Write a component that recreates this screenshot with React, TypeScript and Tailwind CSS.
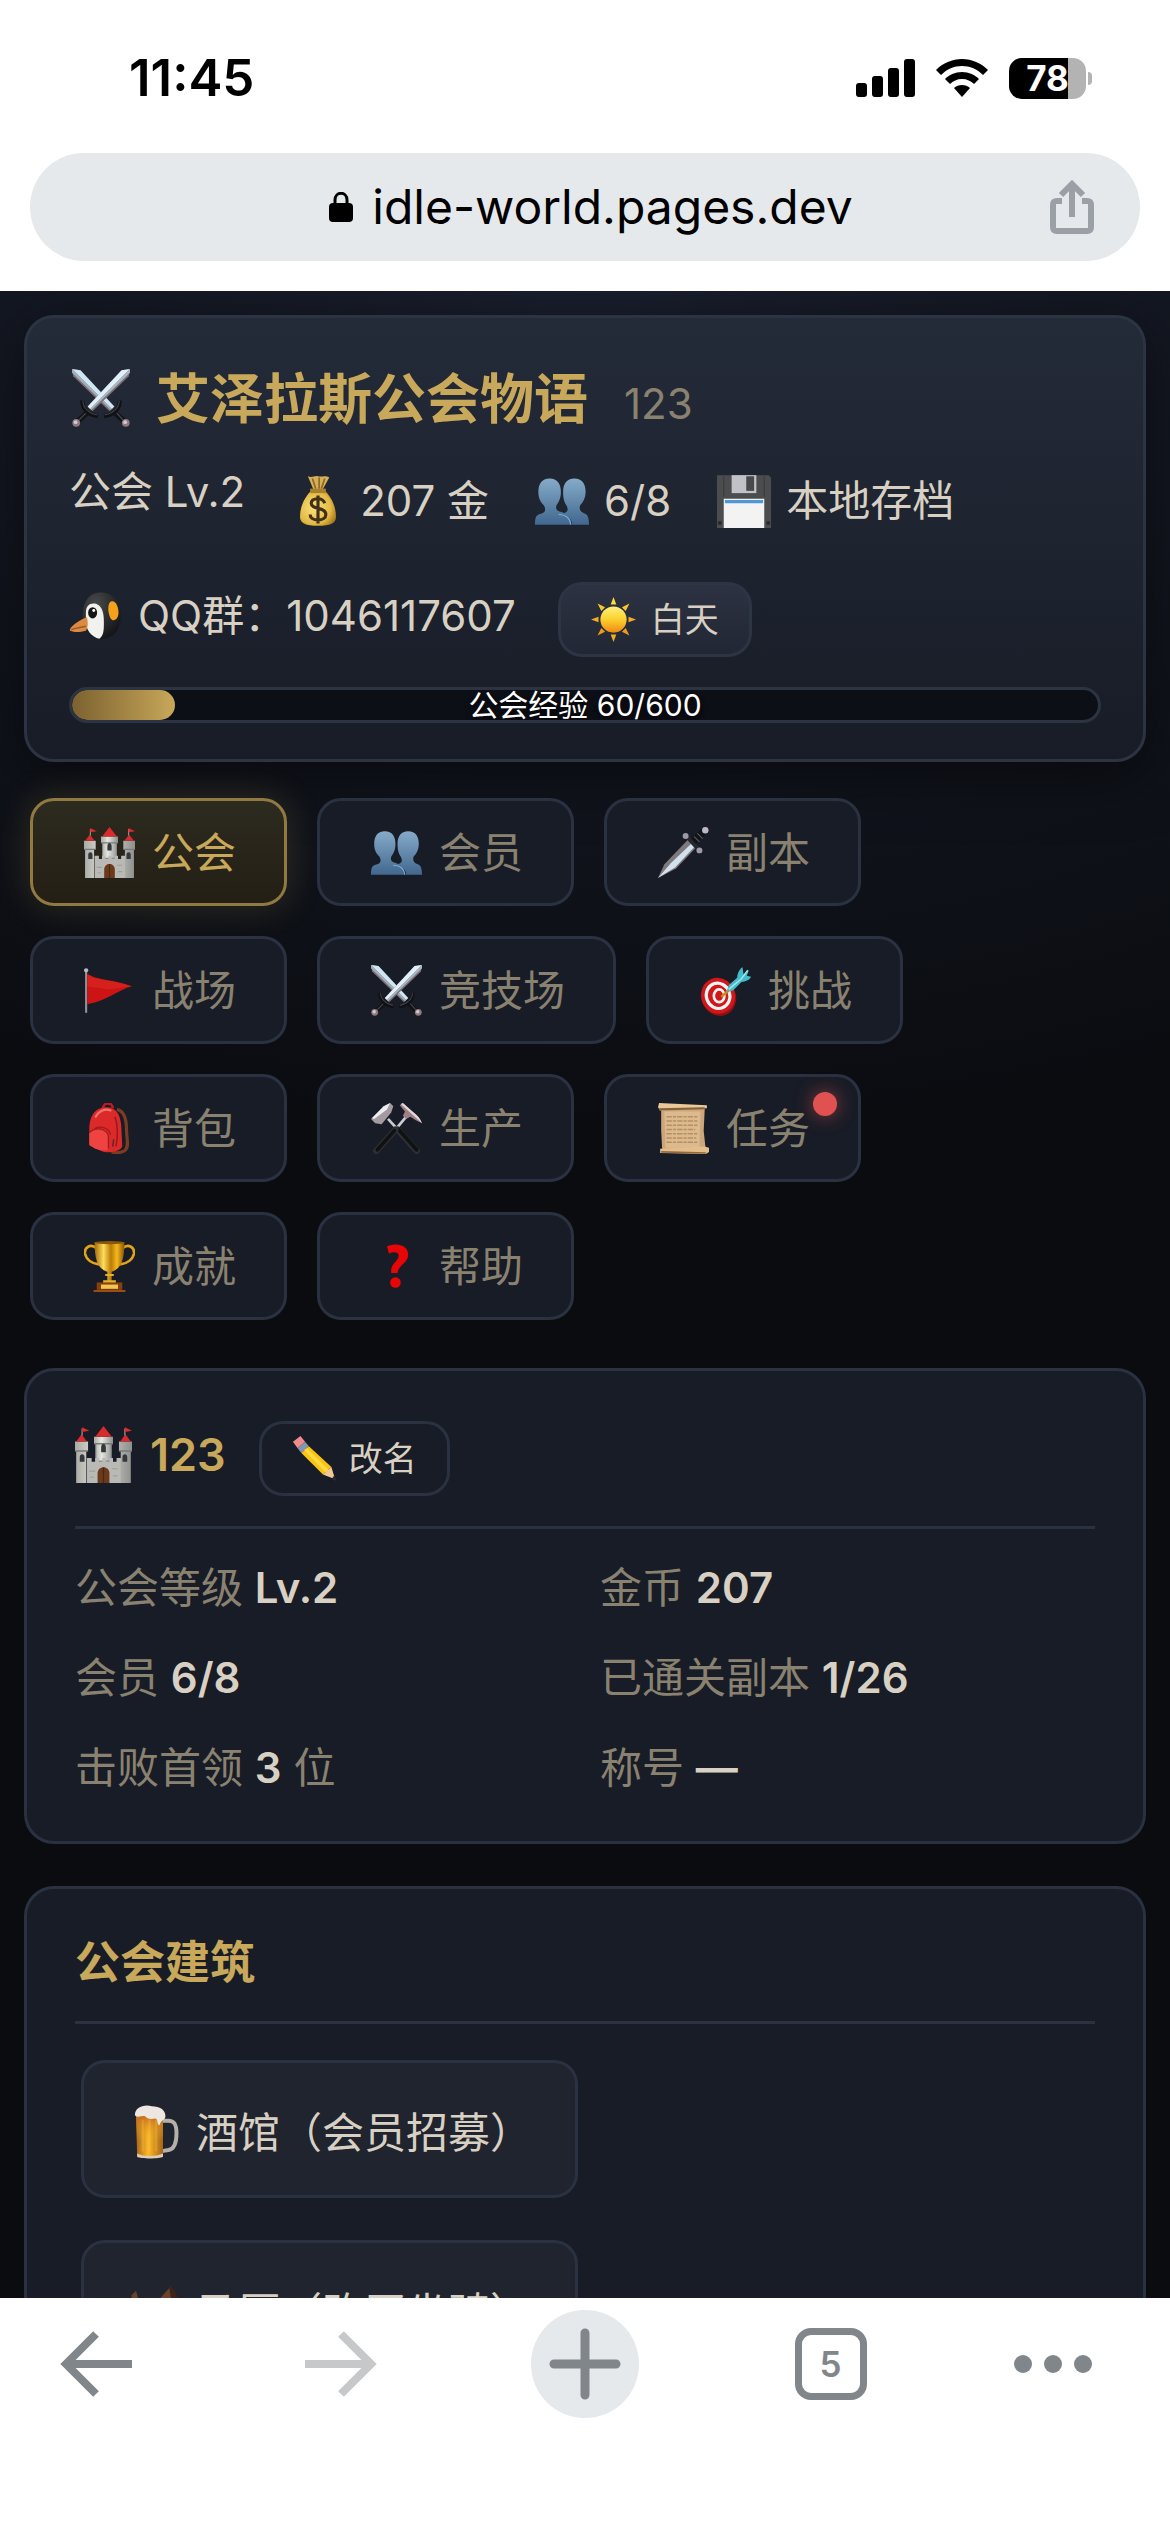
import type { ReactNode } from 'react'

function Svg({ className = 'size-[54px]', children }: { className?: string; children: ReactNode }) {
  return (
    <svg viewBox="0 0 48 48" fill="none" aria-hidden="true" className={`shrink-0 ${className}`}>
      {children}
    </svg>
  )
}

type IconProps = { className?: string }

function Swords({ className }: IconProps) {
  return (
    <Svg className={className}>
      <path d="M0 0 7 1 35 31 31 35 1 6Z" fill="#7f6e76" />
      <path d="M0 0 7 1 35 31 33 33Z" fill="#cfe6f4" />
      <path d="M0 0 33 33 32 34 0 3Z" fill="#9fb0bc" />
      <path d="M48 0 41 1 13 31 17 35 47 6Z" fill="#7f6e76" />
      <path d="M48 0 41 1 13 31 15 33Z" fill="#dff0fa" />
      <path d="M48 0 15 33 16 34 48 3Z" fill="#a5b7c2" />
      <path d="M14 35 5 43M34 35l9 8" stroke="#111316" strokeWidth="4.500" />
      <path d="m14 34-8 8M35 34l7 8" stroke="#44484e" strokeWidth="1" />
      <path d="M8.500 26c0 7 5 12 13 13M39.500 26c0 7-5 12-13 13" stroke="#0f1114" strokeWidth="3.500" />
      <path d="M9 26c0 6 5 11 12 12M39 26c0 6-5 11-12 12" stroke="#3c4046" strokeWidth="1" />
      <circle cx="3.500" cy="44.500" r="3.200" fill="#8e7a80" />
      <circle cx="3" cy="44" r="1.600" fill="#d5c8cc" />
      <circle cx="44.500" cy="44.500" r="3.200" fill="#8e7a80" />
      <circle cx="44" cy="44" r="1.600" fill="#d5c8cc" />
    </Svg>
  )
}

function MoneyBag() {
  return (
    <Svg>
      <defs>
        <radialGradient id="bag" cx=".4" cy=".5" r=".65">
          <stop stopColor="#fbe27a" />
          <stop offset=".7" stopColor="#e3b944" />
          <stop offset="1" stopColor="#a87a1e" />
        </radialGradient>
      </defs>
      <path d="M15 2c4 2 6-1 9 0s6-1 10 1l-6 11h-8Z" fill="#d5b05a" />
      <path d="m19 4 3 9M25 3v10M30 4l-3 9" stroke="#8f6a24" strokeWidth="1.5" />
      <path d="M19 14h10c6 5 11 14 11 24 0 6-5 8-16 8S8 44 8 38c0-10 5-19 11-24Z" fill="url(#bag)" />
      <path d="M17 13h14v4H17z" fill="#a8802e" />
      <path d="M30 26c-1-3-3-4-6-4s-6 1-6 4c0 6 13 3 13 10 0 3-3 5-7 5s-7-2-7-5M24 19v25" stroke="#42301a" strokeWidth="2.8" />
    </Svg>
  )
}

function Busts({ className }: IconProps) {
  return (
    <Svg className={className}>
      <defs>
        <linearGradient id="bust" x1="0" y1="0" x2="0" y2="1">
          <stop stopColor="#86abc9" />
          <stop offset="1" stopColor="#41678f" />
        </linearGradient>
      </defs>
      <path
        d="M13 4c7 0 10 5 10 12 0 6-2 9-4 12-1 4 1 5 5 6 5 2 8 4 8 11H0c0-7 1-9 6-10 3-1 4-3 2-7-3-3-5-6-5-12C3 9 6 4 13 4Z"
        fill="url(#bust)"
      />
      <path
        d="M35 4c7 0 10 5 10 12 0 5-2 9-5 12-1 4 1 6 4 7 3 1 4 4 4 10H33c0-5-4-8-8-10 4-1 5-3 3-7-2-3-3-6-3-12 0-7 3-12 10-12Z"
        fill="url(#bust)"
      />
      <path d="M21 36c5 0 10 2 11 9" stroke="#7ab5d8" strokeWidth="1" />
    </Svg>
  )
}

function Floppy() {
  return (
    <Svg>
      <path d="M0 1h46l2 2v45H0Z" fill="#4b4c4e" />
      <path d="M13 1h22v16H13z" fill="#bfc2c6" />
      <path d="M26 2h7v13h-7z" fill="#48494b" />
      <path d="M6 22h36v26H6z" fill="#f3f3f4" />
      <path d="M7 23h34v3H7z" fill="#4f97d5" />
      <path d="M1 42h3v3H1zM44 42h3v3h-3z" fill="#27282c" />
      <path d="M6 2v18M42 2v18" stroke="#393a3c" />
    </Svg>
  )
}

function Penguin() {
  return (
    <Svg>
      <defs>
        <radialGradient id="penguin" cx=".35" cy=".25" r=".8">
          <stop stopColor="#4a4a49" />
          <stop offset="1" stopColor="#121416" />
        </radialGradient>
      </defs>
      <path d="M28 4c12 0 18 9 18 21 0 13-7 20-18 20-10 0-16-8-16-19C12 13 17 4 28 4Z" fill="url(#penguin)" />
      <path d="M15 22c0-7 4-9 9-8 5 2 7 7 7 16 0 7 0 12-4 15-7-1-12-8-12-15Z" fill="#f1f1ee" />
      <path d="M36 13c4-4 8 2 8 9 0 5-4 9-7 5-2-4-3-10-1-14Z" fill="#f4a11c" />
      <path d="M16 26c1 5 1 9-1 12-5 1-9 2-14 0-2-2 8-10 15-12Z" fill="#dc8a42" />
      <path d="M2 37c5-2 9-2 13-3" stroke="#9a5a26" strokeWidth="1.4" />
      <ellipse cx="21" cy="22" rx="4" ry="5" fill="#151515" />
      <circle cx="22" cy="20" r="1.3" fill="#fff" />
    </Svg>
  )
}

function Sun() {
  return (
    <Svg className="size-[45px]">
      <defs>
        <linearGradient id="sun" x1="0" y1="0" x2="0" y2="1">
          <stop stopColor="#fff07a" />
          <stop offset=".5" stopColor="#fbd02e" />
          <stop offset="1" stopColor="#ee8a12" />
        </linearGradient>
      </defs>
      <circle cx="24" cy="24" r="14" fill="url(#sun)" />
      <path d="m21 8 3-8 3 8Z" fill="#fbdc3a" />
      <path d="m21 40 3 8 3-8ZM8 21l-8 3 8 3ZM40 21l8 3-8 3Z" fill="#f4ac20" />
      <path d="M7 7l8 4-4 4ZM41 7l-8 4 4 4Z" fill="#f8c62c" />
      <path d="M7 41l4-8 4 4ZM41 41l-8-4 4-4Z" fill="#f09a1a" />
    </Svg>
  )
}

function Castle({ className }: IconProps) {
  return (
    <Svg className={className}>
      <defs>
        <linearGradient id="wall" x1="0" y1="0" x2="1" y2="0">
          <stop stopColor="#a9aaa4" />
          <stop offset=".4" stopColor="#e6e6df" />
          <stop offset="1" stopColor="#8d8f8c" />
        </linearGradient>
      </defs>
      <path d="M17 15h14v20H17z" fill="#898c92" />
      <path d="M16 9h16v6H16zM18 15h12v14H18z" fill="url(#wall)" />
      <path d="M10 27h4v3h3v-3h3v3h3v-3h3v3h3v-3h3v3h3v-3h4v21H10z" fill="#b9bab5" />
      <path d="M0 13h11v8H9.500v27H1V21H0zM37 13h11v8h-1v27h-8.500V21H37z" fill="url(#wall)" />
      <path d="M0 21h11M37 21h11M16 15h16" stroke="#777a7c" strokeWidth="1.200" />
      <path d="M17 9 24 0l7 9ZM1 13l4.500-6 4.500 6ZM38 13l4.500-6 4.500 6Z" fill="#d92a2c" />
      <path d="M6 2v6M42 2v6" stroke="#999" />
      <path d="m6 1 6 3-6 1ZM42 1l6 3-6 1Z" fill="#e02a2c" />
      <path d="M19 48V40c0-7 10-7 10 0v8Z" fill="#6b3a1c" />
      <path d="M24 35v13" stroke="#4a260f" />
      <path d="M22 18c0-4 4-4 4 0v4h-4ZM4 26c0-3 4-3 4 0v4H4ZM40 26c0-3 4-3 4 0v4h-4Z" fill="#34373c" />
      <path d="M12 38h5M31 36h5M13 43h3M32 42h4" stroke="#9fa09b" />
    </Svg>
  )
}

function Dagger({ className }: IconProps) {
  return (
    <Svg className={className}>
      <path d="M0 48 6 35 29 11l8 7-20 21Z" fill="#81777e" />
      <path d="M0 48 12 34 33 14l3 3L16 38Z" fill="#cfe2ee" />
      <path d="M33 14 43 4" stroke="#111316" strokeWidth="6" />
      <path d="m34 9 5 5M37 6l5 5" stroke="#5a5d64" strokeWidth="1" />
      <path d="m27 9 12 13" stroke="#25282c" strokeWidth="3.500" />
      <circle cx="26" cy="8.500" r="2.800" fill="#9c9aa8" />
      <circle cx="39" cy="22" r="2.800" fill="#9c9aa8" />
      <circle cx="44.500" cy="3" r="3" fill="#bcb9c4" />
    </Svg>
  )
}

function Flag({ className }: IconProps) {
  return (
    <Svg className={className}>
      <path d="M2 5v40" stroke="#8e9297" strokeWidth="2" />
      <circle cx="2" cy="5" r="2" fill="#b8bcc0" />
      <path d="M3 8c10 7 19 4 42 12-14 4-24 14-42 17Z" fill="#cc1414" />
      <path d="M3 9c10 6 19 4 42 11l-22 3L3 20Z" fill="#dd2a20" opacity=".55" />
    </Svg>
  )
}

function Target({ className }: IconProps) {
  return (
    <Svg className={className}>
      <ellipse cx="18" cy="31" rx="16" ry="17" fill="#8f0f13" transform="rotate(-20 18 31)" />
      <ellipse cx="17" cy="29" rx="16" ry="17" fill="#d0171c" transform="rotate(-20 17 29)" />
      <ellipse cx="17" cy="29" rx="11" ry="12" stroke="#f5f3f2" strokeWidth="3" transform="rotate(-20 17 29)" />
      <ellipse cx="18" cy="29" rx="5" ry="6" stroke="#f5f3f2" strokeWidth="2.500" />
      <path d="m20 30 8-7" stroke="#c98a14" strokeWidth="2.500" />
      <path d="m25 25 2-6 8-7c0-5 3-9 5-10l1 7 5-4-2 5 4 1c-2 4-5 4-9 5l-8 8Z" fill="#45bccb" />
      <path d="m27 23 12-10 6-8" stroke="#9be6ec" strokeWidth="1.500" />
    </Svg>
  )
}

function Backpack({ className }: IconProps) {
  return (
    <Svg className={className}>
      <path d="M31 6c8 2 9 12 9 19 0 8 3 17-2 20-4 2-9 2-12 1" stroke="#7a3c22" strokeWidth="3" />
      <path d="M18 5c0-6 9-6 9 0" stroke="#b91c20" strokeWidth="2.500" />
      <path d="M5 22C6 10 12 4 21 4c9 0 13 6 14 17l1 20c-2 5-14 7-20 4L5 40Z" fill="#dc2a2b" />
      <path d="M11 13C14 7 20 5 25 7" stroke="#f4736b" strokeWidth="2" strokeLinecap="round" />
      <path d="M5 28c6-6 16-4 18 3v13c-4 2-13 0-18-5Z" fill="#ee4340" />
      <path d="M5 28c6-6 16-4 18 3v12M10 24c7-3 14 0 15 6" stroke="#a21a1e" strokeWidth="1.200" />
      <path d="M29 13c3 7 3 20 1 28" stroke="#9c1a1d" strokeWidth="1.500" />
      <path d="m28 34-1 7" stroke="#65282a" strokeWidth="1.500" />
    </Svg>
  )
}

function HammerPick({ className }: IconProps) {
  return (
    <Svg className={className}>
      <path d="m16 15 11 12M33 13 23 25" stroke="#c9cdd2" strokeWidth="2.500" />
      <path d="M25 25 43 45" stroke="#2c2f33" strokeWidth="6" strokeLinecap="round" />
      <path d="M26 25 43 44" stroke="#101113" strokeWidth="3.500" strokeLinecap="round" />
      <path d="M23 25 5 45" stroke="#2c2f33" strokeWidth="6" strokeLinecap="round" />
      <path d="M22 26 6 44" stroke="#101113" strokeWidth="3.500" strokeLinecap="round" />
      <path d="M0 15 12 3l6-3 3 3-2 6-9 11-6-1Z" fill="#a39ba0" />
      <path d="M1 14 12 3l6-3-3 6-12 9Z" fill="#eceef0" />
      <path d="M27 2l3-2 9 8c4 3 7 6 9 11-5-2-8-4-11-6l-4 2-3-3 2-4Z" fill="#a07f84" />
      <path d="m28 1 2-1 9 8c4 3 7 6 9 11Z" fill="#dcdadf" />
    </Svg>
  )
}

function Scroll({ className }: IconProps) {
  return (
    <Svg className={className}>
      <path d="M3 5h41l-1 21 2 19H4L3 26Z" fill="#cda77b" />
      <path d="M6 8h34l-1 34H7Z" fill="#dcba8e" />
      <path d="M8 13h30M8 17h29M8 21h30M8 25h27M8 29h30M8 33h28M8 37h30" stroke="#b58f63" strokeWidth="1.300" strokeDasharray="5 1 3 1" />
      <path d="M1 0 46 2v3L2 7 0 4Z" fill="#eac897" />
      <path d="m1 6 43-1" stroke="#84603c" strokeWidth="2" />
      <path d="m2 43 42-2 4 1v4l-3 2-43-1Z" fill="#e3bd8b" />
      <path d="m3 46 42 1" stroke="#92683f" strokeWidth="1.500" />
    </Svg>
  )
}

function Trophy({ className }: IconProps) {
  return (
    <Svg className={className}>
      <defs>
        <linearGradient id="cup" x1="0" y1="0" x2="1" y2="0">
          <stop stopColor="#a56a09" />
          <stop offset=".3" stopColor="#ffdc5a" />
          <stop offset=".55" stopColor="#b97b06" />
          <stop offset=".75" stopColor="#f5b81d" />
          <stop offset="1" stopColor="#8a5405" />
        </linearGradient>
      </defs>
      <path d="M12 7C6 2 0 6 1 12c1 5 6 9 13 10M36 7c6-5 12-1 11 5-1 5-6 9-13 10" stroke="#e3a418" strokeWidth="2.500" />
      <path d="M10 1h28c0 15-2 25-12 28v10h-4V29C12 26 10 16 10 1Z" fill="url(#cup)" />
      <ellipse cx="24" cy="1.500" rx="14" ry="1.500" fill="#8b5808" />
      <path d="M20 31h8v2h-8zM18 37h12v3H18z" fill="#e8b02a" />
      <path d="M12 39h24v7H12z" fill="#86400c" />
      <path d="M16 41h16v4H16z" fill="#f3c555" />
      <path d="M9 46h30v2H9z" fill="#9c4d12" />
    </Svg>
  )
}

function Question({ className }: IconProps) {
  return (
    <Svg className={className}>
      <path d="M15 5c10-4 20-1 20 8 0 8-9 9-10 17h-6c-1-9 7-11 7-16 0-4-5-4-9-2Z" fill="#e80505" />
      <circle cx="23" cy="39" r="5" fill="#e80505" />
    </Svg>
  )
}

function Pencil() {
  return (
    <Svg className="size-[45px]">
      <path d="m1 6 8-6 5 6-8 7Z" fill="#ee8b8c" />
      <path d="m6 13 8-7 4 5-8 7Z" fill="#8296b4" />
      <path d="m10 18 8-7 24 22-9 8Z" fill="#fac413" />
      <path d="m13 15 3-2 23 23-3 3Z" fill="#ffda42" />
      <path d="m33 41 9-8 4 13Z" fill="#f0c994" />
      <path d="m42 46 3-4 3 6Z" fill="#2b2b2e" />
    </Svg>
  )
}

function Beer() {
  return (
    <Svg>
      <defs>
        <linearGradient id="beer" x1="0" y1="0" x2="1" y2="0">
          <stop stopColor="#8f4a14" />
          <stop offset=".45" stopColor="#fcb625" />
          <stop offset="1" stopColor="#8f4a12" />
        </linearGradient>
        <linearGradient id="ale" x1="0" y1="0" x2="0" y2="1">
          <stop stopColor="#c56a1c" />
          <stop offset=".6" stopColor="#ffc530" stopOpacity=".2" />
        </linearGradient>
      </defs>
      <path d="M31 14h6c5 0 7 3 7 11s-2 14-7 15l-6 1" stroke="#b3b1a9" strokeWidth="3.500" />
      <path d="M8 9h24v35c0 3-22 3-23 0Z" fill="url(#beer)" />
      <path d="M8 9h24v35c0 3-22 3-23 0Z" fill="url(#ale)" />
      <path d="M14 13v28M20 13v28M26 13v28" stroke="#fcd04a" opacity=".25" strokeWidth="2" />
      <path d="M7 9C7 2 15-1 22 1c8 0 13 4 12 10-1 3-4 2-5 7-3-1-1-6-4-6-5 1-7 0-9-2-3-1-6 2-9-1Z" fill="#eee6e0" />
      <path d="M9 43c5 3 17 3 23 0v3c-3 2-20 2-23 0Z" fill="#dccfb9" />
    </Svg>
  )
}

function Horse() {
  return (
    <Svg>
      <path d="M4 9 8 5l2 7 14 6L39 1l4 9 3 18-7 18H18l2-18L4 26Z" fill="#6b432a" />
      <path d="M37 0c8 5 10 14 9 27l-7-16Z" fill="#3c2418" />
    </Svg>
  )
}

const tabs = [
  { label: '公会', Icon: Castle, active: true },
  { label: '会员', Icon: Busts },
  { label: '副本', Icon: Dagger },
  { label: '战场', Icon: Flag },
  { label: '竞技场', Icon: Swords },
  { label: '挑战', Icon: Target },
  { label: '背包', Icon: Backpack },
  { label: '生产', Icon: HammerPick },
  { label: '任务', Icon: Scroll, notice: true },
  { label: '成就', Icon: Trophy },
  { label: '帮助', Icon: Question },
]

const stats = [
  { label: '公会等级', value: 'Lv.2' },
  { label: '金币', value: '207' },
  { label: '会员', value: '6/8' },
  { label: '已通关副本', value: '1/26' },
  { label: '击败首领', value: '3', unit: '位' },
  { label: '称号', value: '—' },
]

function StatusBar() {
  return (
    <div className="flex h-[153px] items-start justify-between pt-[48px] pr-[78px] pl-[129px] text-black">
      <span className="text-[51px] leading-[60px] font-semibold">11:45</span>
      <div className="flex h-[60px] items-center gap-[21px]">
        <svg viewBox="0 0 59 38" className="h-[38px] w-[59px]" aria-label="信号">
          <rect y="24" width="11" height="14" rx="3" />
          <rect x="16" y="17" width="11" height="21" rx="3" />
          <rect x="32" y="9" width="11" height="29" rx="3" />
          <rect x="48" width="11" height="38" rx="3" />
        </svg>
        <svg viewBox="0 0 52 38" className="h-[38px] w-[52px]" aria-label="无线网络">
          <path d="M26 0c10 0 19 4 26 11l-5 5C41 10 34 7 26 7S11 10 5 16L0 11C7 4 16 0 26 0Z" />
          <path d="M26 13c7 0 13 3 17 7l-5 5c-3-3-7-5-12-5s-9 2-12 5l-5-5c4-4 10-7 17-7Z" />
          <path d="M26 26c3 0 6 1 8 3l-8 9-8-9c2-2 5-3 8-3Z" />
        </svg>
        <div className="flex items-center gap-[2px]">
          <div className="flex h-[41px] w-[77px] items-center justify-center rounded-[13px] bg-linear-to-r from-black from-77% to-[#b3b3b3] to-77% text-[35px] leading-none font-bold text-white">
            78
          </div>
          <div className="h-[13px] w-[4px] rounded-r-full bg-[#b3b3b3]" />
        </div>
      </div>
    </div>
  )
}

function AddressBar() {
  return (
    <div className="px-[30px] pb-[30px]">
      <div className="flex h-[108px] items-center rounded-full bg-[#e6e9ec] pr-[46px] pl-[102px]">
        <button type="button" className="flex flex-1 items-center justify-center gap-[19px] text-[48px] text-black">
          <svg viewBox="0 0 24 30" className="h-[30px] w-[24px]" aria-hidden="true">
            <rect y="11" width="24" height="19" rx="4" />
            <path d="M6 13V8c0-9 12-9 12 0v5" fill="none" stroke="#000" strokeWidth="3" />
          </svg>
          idle-world.pages.dev
        </button>
        <button type="button" aria-label="分享">
          <svg viewBox="0 0 44 54" className="h-[54px] w-[44px]" fill="none" stroke="#9aa0a6" strokeWidth="6">
            <path d="M12 21H7c-3 0-4 1-4 4v22c0 3 1 4 4 4h30c3 0 4-1 4-4V25c0-3-1-4-4-4h-5M22 37V5M11 15 22 4l11 11" />
          </svg>
        </button>
      </div>
    </div>
  )
}

function GuildHeader() {
  return (
    <header className="rounded-[30px] border-3 border-[#2c3342] bg-linear-to-b from-[#242b38] via-[#1c222e] via-60% to-[#181c26] px-[42px] py-[36px] shadow-[0_12px_60px_rgba(0,0,0,0.5)]">
      <div className="flex h-[88px] items-center">
        <Swords className="ml-[3px] size-[58px]" />
        <div className="ml-[26px] flex items-baseline gap-[36px] pt-[5px]">
          <h1 className="text-[54px] leading-[66px] font-bold text-[#c8a85a]">艾泽拉斯公会物语</h1>
          <span className="text-[42px] text-[#8a8270]">123</span>
        </div>
      </div>
      <div className="mt-[18px] flex items-start gap-[46px] whitespace-nowrap">
        <span className="leading-[63px]">公会 Lv.2</span>
        <span className="flex h-[81px] items-center gap-[15px]">
          <MoneyBag />
          207 金
        </span>
        <span className="flex h-[81px] items-center gap-[15px]">
          <Busts />
          6/8
        </span>
        <span className="flex h-[81px] items-center gap-[15px]">
          <Floppy />
          本地存档
        </span>
      </div>
      <div className="mt-[41px] flex items-start gap-[42px] whitespace-nowrap">
        <span className="flex h-[66px] items-center gap-[15px]">
          <Penguin />
          QQ群：1046117607
        </span>
        <button
          type="button"
          className="flex h-[75px] items-center gap-[15px] rounded-[24px] border-3 border-[#2d3444] bg-linear-to-b from-[#2d3242] to-[#222735] px-[30px] text-[34px]"
        >
          <Sun />
          白天
        </button>
      </div>
      <div
        role="progressbar"
        aria-label="公会经验"
        aria-valuemin={0}
        aria-valuemax={600}
        aria-valuenow={60}
        className="relative mt-[30px] flex h-[36px] items-center justify-center overflow-hidden rounded-full border-3 border-[#2c3342] bg-[#0c0f16]"
      >
        <div className="absolute inset-y-0 left-0 w-1/10 rounded-full bg-linear-to-r from-[#7c6230] to-[#c8a85a]" />
        <span className="relative text-[30px] leading-none text-white [text-shadow:0_3px_6px_#000]">公会经验 60/600</span>
      </div>
    </header>
  )
}

function Tabs() {
  return (
    <nav className="mt-[36px] flex flex-wrap gap-[30px] px-[6px]">
      {tabs.map(({ label, Icon, active, notice }) => (
        <button
          key={label}
          type="button"
          className={`relative flex h-[108px] items-center gap-[14px] rounded-[24px] border-3 px-[48px] ${
            active
              ? 'border-[#917a41] bg-linear-to-b from-[#2d2a1f] to-[#231f15] text-[#c8a85a] shadow-[0_0_36px_rgba(200,168,90,0.2)]'
              : 'border-[#2a3140] bg-[#181c26] text-[#8a8270]'
          }`}
        >
          <span className="flex w-[57px] justify-center">
            <Icon className="size-[51px]" />
          </span>
          {label}
          {notice && (
            <span className="absolute top-[15px] right-[21px] size-[24px] rounded-full bg-[#e05252] shadow-[0_0_18px_rgba(224,82,82,0.6)]" />
          )}
        </button>
      ))}
    </nav>
  )
}

function Panel({ className, children }: { className: string; children: ReactNode }) {
  return <section className={`rounded-[30px] border-3 border-[#2a3140] bg-[#181c26] px-[48px] pt-[42px] ${className}`}>{children}</section>
}

function GuildInfo() {
  return (
    <Panel className="mt-[48px] pb-[42px]">
      <div className="flex items-start border-b-3 border-[#2a3140] pb-[30px] whitespace-nowrap">
        <h2 className="flex h-[83px] items-center gap-[18px] text-[45px] font-semibold text-[#c8a85a]">
          <Castle className="size-[57px]" />
          123
        </h2>
        <button type="button" className="mt-[8px] ml-[33px] flex h-[75px] items-center gap-[12px] rounded-[24px] border-3 border-[#2a3140] px-[30px] text-[34px]">
          <Pencil />
          改名
        </button>
      </div>
      <div className="mt-[27px] grid grid-cols-2 gap-x-[30px] gap-y-[27px] text-[#8a8270]">
        {stats.map(({ label, value, unit }) => (
          <p key={label} className="leading-[63px]">
            {label} <strong className="font-semibold text-[#d8d0c2]">{value}</strong>
            {unit && ` ${unit}`}
          </p>
        ))}
      </div>
    </Panel>
  )
}

function Buildings() {
  const items = [
    { label: '酒馆（会员招募）', icon: <Beer /> },
    { label: '马厩（购买坐骑）', icon: <Horse /> },
  ]
  return (
    <Panel className="mt-[42px] pb-[48px]">
      <h2 className="border-b-3 border-[#2a3140] pb-[26px] text-[45px] leading-[64px] font-bold text-[#c8a85a]">公会建筑</h2>
      <div className="mt-[36px] flex flex-col items-start gap-[42px] px-[6px]">
        {items.map(({ label, icon }) => (
          <button
            key={label}
            type="button"
            className="flex h-[138px] items-center gap-[15px] rounded-[24px] border-3 border-[#2a3140] bg-[#20242f] px-[43px] pt-[6px] whitespace-nowrap"
          >
            {icon}
            {label}
          </button>
        ))}
      </div>
    </Panel>
  )
}

function Toolbar() {
  return (
    <footer className="bg-white pt-[12px] pb-[114px] text-[#80868a]">
      <div className="flex items-center justify-between pr-[78px] pl-[42px]">
        <button type="button" aria-label="后退" className="flex size-[108px] items-center justify-center">
          <svg viewBox="0 0 72 66" className="h-[66px] w-[72px]" fill="none" stroke="currentColor" strokeWidth="8">
            <path d="M72 33H6M36 3 6 33l30 30" />
          </svg>
        </button>
        <button type="button" aria-label="前进" className="flex size-[108px] items-center justify-center text-[#c7c8c9]">
          <svg viewBox="0 0 72 66" className="h-[66px] w-[72px]" fill="none" stroke="currentColor" strokeWidth="8">
            <path d="M0 33h66M36 3l30 30-30 30" />
          </svg>
        </button>
        <button type="button" aria-label="新标签页" className="flex size-[108px] items-center justify-center rounded-full bg-[#e5e9ec]">
          <svg viewBox="0 0 72 72" className="size-[72px]" fill="none" stroke="currentColor" strokeWidth="9" strokeLinecap="round">
            <path d="M5 36h62M36 5v62" />
          </svg>
        </button>
        <button type="button" aria-label="标签页" className="flex h-[108px] w-[102px] items-center justify-center pl-[8px]">
          <span className="flex size-[72px] items-center justify-center rounded-[16px] border-7 border-current text-[35px] leading-none font-semibold">5</span>
        </button>
        <button type="button" aria-label="更多" className="flex h-[108px] items-center gap-[12px]">
          <span className="size-[18px] rounded-full bg-current" />
          <span className="size-[18px] rounded-full bg-current" />
          <span className="size-[18px] rounded-full bg-current" />
        </button>
      </div>
    </footer>
  )
}

export default function App() {
  return (
    <div className="flex h-screen flex-col overflow-hidden bg-white font-['Inter','Noto_Sans_CJK_SC',sans-serif]" lang="zh-CN">
      <StatusBar />
      <AddressBar />
      <main className="min-h-0 flex-1 overflow-hidden bg-[#0a0c10] bg-[radial-gradient(ellipse_1400px_850px_at_top,#1a1f2e,#0a0c10)] px-[24px] pt-[24px] text-[42px] text-[#d8d0c2]">
        <GuildHeader />
        <Tabs />
        <GuildInfo />
        <Buildings />
      </main>
      <Toolbar />
    </div>
  )
}
